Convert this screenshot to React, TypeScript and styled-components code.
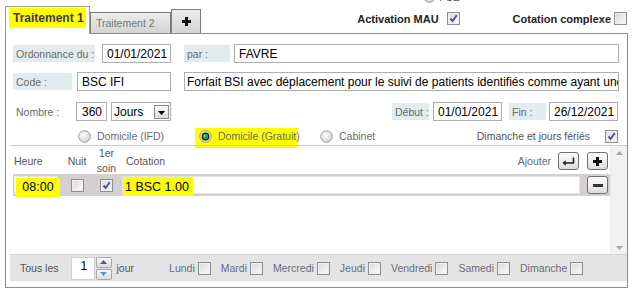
import React from "react";
import styled, { createGlobalStyle } from "styled-components";

const FONT = `"Liberation Sans", Arial, sans-serif`;

const GlobalStyle = createGlobalStyle`
  html, body { margin: 0; padding: 0; background: #ffffff; }
  body { font-family: ${FONT}; }
  * { box-sizing: border-box; }
`;

const Page = styled.div`
  width: 637px;
  height: 292px;
  overflow: hidden;
  font-family: ${FONT};
  color: #555;
`;

/* ---------- top bar with tabs ---------- */
const TopBar = styled.div`
  display: flex;
  height: 33px;
  align-items: flex-end;
`;

const Tabs = styled.div`
  display: flex;
  align-items: flex-end;
  padding-left: 5px;
  height: 100%;
`;

const ActiveTab = styled.div`
  position: relative;
  z-index: 2;
  width: 85px;
  height: 28px;
  margin-bottom: -1px;
  background: #fff;
  border: 1px solid #9a9a9a;
  border-bottom: none;
  padding: 1px 0 0 3px;
  display: flex;
  align-items: flex-start;
`;

const Mark = styled.span`
  background: #ffff00;
`;

const ActiveTabText = styled(Mark)`
  font-weight: bold;
  font-size: 12px;
  color: #3c3c3c;
  height: 20px;
  width: 77px;
  display: flex;
  align-items: center;
  padding-left: 4px;
  white-space: nowrap;
`;

const Tab = styled.div<{ $w: number; $h: number; $center?: boolean }>`
  width: ${(p) => p.$w}px;
  height: ${(p) => p.$h}px;
  background: linear-gradient(#ececec, #d4d4d4);
  border: 1px solid #7c7c7c;
  border-bottom: none;
  display: flex;
  align-items: center;
  justify-content: ${(p) => (p.$center ? "center" : "flex-start")};
  padding-left: ${(p) => (p.$center ? 0 : 5)}px;
  font-size: 10.5px;
  color: #777;
  white-space: nowrap;
`;

const TopRight = styled.div`
  margin-left: auto;
  padding-right: 10px;
  align-self: stretch;
  display: flex;
  flex-direction: column;
`;

const FseRow = styled.div`
  display: flex;
  align-items: center;
  gap: 3px;
  height: 13px;
  margin-top: -10px;
  padding-left: 66px;
  font-size: 10.5px;
  color: #555;
`;

const OptionsRow = styled.div`
  display: flex;
  align-items: center;
  margin-top: 9px;
  height: 13px;
`;

const BoldOption = styled.span<{ $gap: number; $ml?: number }>`
  display: flex;
  align-items: center;
  gap: ${(p) => p.$gap}px;
  margin-left: ${(p) => p.$ml ?? 0}px;
  font-weight: bold;
  font-size: 11px;
  color: #222;
  white-space: nowrap;
`;

/* ---------- panel ---------- */
const Panel = styled.div`
  margin-left: 5px;
  width: 623px;
  height: 255px;
  border: 1px solid #8d8d8d;
  display: flex;
  flex-direction: column;
`;

const Form = styled.div`
  height: 111px;
  padding: 10px 8px 0 7px;
  display: flex;
  flex-direction: column;
`;

const Row = styled.div<{ $mt?: number; $h?: number; $pl?: number }>`
  display: flex;
  align-items: center;
  height: ${(p) => p.$h ?? 19}px;
  margin-top: ${(p) => p.$mt ?? 0}px;
  padding-left: ${(p) => p.$pl ?? 0}px;
`;

const FieldLabel = styled.span<{ $w: number; $ml?: number; $plain?: boolean }>`
  flex-shrink: 0;
  width: ${(p) => p.$w}px;
  height: 17px;
  margin-left: ${(p) => p.$ml ?? 0}px;
  background: ${(p) => (p.$plain ? "transparent" : "#e1ecee")};
  color: #6a6a6a;
  font-size: 10.5px;
  padding-left: 3px;
  display: flex;
  align-items: center;
  white-space: nowrap;
`;

const TextBox = styled.div<{ $w?: number; $ml?: number; $pl?: number }>`
  ${(p) => (p.$w ? `width: ${p.$w}px; flex-shrink: 0;` : "flex: 1; min-width: 0;")}
  height: 19px;
  margin-left: ${(p) => p.$ml ?? 0}px;
  border: 1px solid #adadad;
  background: #fff;
  color: #000;
  font-size: 12px;
  padding-left: ${(p) => p.$pl ?? 4}px;
  display: flex;
  align-items: center;
  white-space: nowrap;
  overflow: hidden;
`;

const SelectBox = styled.div`
  width: 60px;
  height: 19px;
  margin-left: 4px;
  border: 1px solid #adadad;
  background: #fff;
  color: #000;
  font-size: 12px;
  padding: 0 1px 0 2px;
  display: flex;
  align-items: center;
  justify-content: space-between;
`;

const DropButton = styled.span`
  width: 15px;
  height: 14px;
  border: 1px solid #8a8a8a;
  background: linear-gradient(#fafafa, #dcdcdc);
  display: flex;
  align-items: center;
  justify-content: center;
  padding-top: 2px;
`;

const Spacer = styled.span`
  flex: 1;
`;

const EdgeGap = styled.span`
  flex: 0 0 1px;
`;

const RadioOption = styled.span<{ $w?: number }>`
  display: flex;
  align-items: center;
  gap: 6px;
  width: ${(p) => (p.$w ? `${p.$w}px` : "auto")};
  font-size: 10.5px;
  color: #6a6a6a;
  white-space: nowrap;
`;

const MarkedRadio = styled(Mark)`
  display: flex;
  align-items: center;
  gap: 6px;
  margin-left: -4px;
  padding: 2px 0 5px 4px;
  margin-top: 3px;
  width: 102px;
  height: 20px;
`;

const PlainOption = styled.span<{ $gap: number; $mr?: number }>`
  display: flex;
  align-items: center;
  gap: ${(p) => p.$gap}px;
  margin-right: ${(p) => p.$mr ?? 0}px;
  font-size: 10.5px;
  color: #555;
  white-space: nowrap;
`;

/* ---------- grid ---------- */
const GridArea = styled.div`
  display: flex;
  height: 109px;
  margin-left: 4px;
  border-top: 1px solid #c9c9c9;
`;

const GridBody = styled.div`
  flex: 1;
  padding-left: 3px;
  display: flex;
  flex-direction: column;
`;

const GridRow = styled.div<{ $data?: boolean }>`
  display: grid;
  grid-template-columns: 47px 34px 25px 1fr 29px;
  align-items: center;
  height: ${(p) => (p.$data ? 22 : 27)}px;
  margin-top: ${(p) => (p.$data ? 1 : 0)}px;
  background: ${(p) => (p.$data ? "#d4d0d0" : "transparent")};
  font-size: 10.5px;
  color: #555;
`;

const Cell = styled.div<{ $pl?: number; $center?: boolean }>`
  display: flex;
  align-items: center;
  justify-content: ${(p) => (p.$center ? "center" : "flex-start")};
  padding-left: ${(p) => p.$pl ?? 0}px;
  text-align: center;
  line-height: 15px;
  white-space: nowrap;
`;

const HeaderActions = styled.div`
  display: flex;
  align-items: center;
  justify-content: flex-end;
  gap: 7px;
  padding-right: 2px;
  color: #6a6a6a;
`;

const HeaderTitle = styled.span`
  margin-right: auto;
  padding-left: 7px;
  color: #555;
`;

const IconButton = styled.button`
  width: 21px;
  height: 18px;
  padding: 0;
  border: 1px solid #6f6f6f;
  border-radius: 3px;
  background: linear-gradient(#fdfdfd, #dedede);
  display: flex;
  align-items: center;
  justify-content: center;
`;

const TimeBox = styled.div`
  width: 44px;
  height: 18px;
  margin-left: 1px;
  background: #fff;
  border: 1px solid #e4e4e4;
  padding: 1px 0 0 1px;
`;

const TimeMark = styled(Mark)`
  display: flex;
  align-items: center;
  justify-content: center;
  width: 44px;
  height: 19px;
  font-size: 12.5px;
  color: #000;
`;

const CotationBox = styled.div`
  height: 18px;
  margin: 0 1px 0 3px;
  background: #fff;
  border: 1px solid #e4e4e4;
`;

const CotationMark = styled(Mark)`
  display: flex;
  align-items: center;
  width: 70px;
  height: 19px;
  padding-left: 2px;
  font-size: 12.5px;
  color: #000;
  white-space: nowrap;
`;

const ScrollBar = styled.div`
  width: 17px;
  background: #f1f1f1;
  border-left: 1px solid #e8e8e8;
  display: flex;
  flex-direction: column;
  align-items: center;
  justify-content: space-between;
  padding: 5px 0 4px;
`;

/* ---------- bottom bar ---------- */
const BottomBar = styled.div`
  height: 27px;
  margin-left: 4px;
  background: #e4e4e4;
  border-top: 1px solid #d6d6d6;
  display: flex;
  align-items: center;
  padding-left: 10px;
  font-size: 10.5px;
  color: #555;
  white-space: nowrap;
`;

const SpinInput = styled.div`
  width: 24px;
  height: 23px;
  margin-left: 12px;
  background: #fff;
  border: 1px solid #d0d0d0;
  color: #000;
  font-size: 12px;
  padding: 0 0 0 9px;
  line-height: 17px;
`;

const SpinButtons = styled.div`
  width: 16px;
  height: 23px;
  margin-left: 1px;
  display: flex;
  flex-direction: column;
  gap: 1px;
`;

const SpinButton = styled.span`
  flex: 1;
  border: 1px solid #a8a8a8;
  border-radius: 2px;
  background: linear-gradient(#f7f7f7, #dcdcdc);
  display: flex;
  align-items: center;
  justify-content: center;
`;

const Unit = styled.span`
  margin-left: 5px;
`;

const Days = styled.div`
  display: flex;
  align-items: center;
  gap: 10px;
  margin-left: 35px;
`;

const Day = styled.span`
  display: flex;
  align-items: center;
  gap: 3px;
  color: #6b6b80;
`;

const Tail = styled.div`
  height: 6px;
`;

/* ---------- small drawn controls ---------- */
const BoxShell = styled.span`
  flex-shrink: 0;
  width: 13px;
  height: 13px;
  border: 1px solid #8e8e8e;
  background: linear-gradient(135deg, #d8d8d8, #fdfdfd);
  box-shadow: inset 0 0 0 1px #efefef;
  display: inline-flex;
  align-items: center;
  justify-content: center;
`;

function Check({ checked }: { checked?: boolean }) {
  return (
    <BoxShell>
      {checked && (
        <svg width="11" height="11" viewBox="0 0 11 11">
          <path d="M2.5 5.5 L4.6 8 L8.8 2.2" stroke="#4a58a6" strokeWidth="2" fill="none" />
        </svg>
      )}
    </BoxShell>
  );
}

function Radio({ selected }: { selected?: boolean }) {
  const id = selected ? "rs" : "ru";
  return (
    <svg width="13" height="13" viewBox="0 0 13 13" style={{ flexShrink: 0 }}>
      <defs>
        <radialGradient id={id} cx="0.4" cy="0.35" r="0.7">
          <stop offset="0" stopColor="#ffffff" />
          <stop offset="1" stopColor="#cfcfcf" />
        </radialGradient>
      </defs>
      <circle cx="6.5" cy="6.5" r="5.8" fill={`url(#${id})`} stroke="#9b9b9b" strokeWidth="1" />
      {selected && (
        <>
          <circle cx="6.5" cy="6.5" r="3.9" fill="#1f2a1f" />
          <circle cx="6.5" cy="6.5" r="2.7" fill="#2ea52e" />
          <circle cx="5.8" cy="5.8" r="0.9" fill="#9be29b" />
        </>
      )}
    </svg>
  );
}

const Tri = ({ down, color, w = 7, h = 4 }: { down?: boolean; color: string; w?: number; h?: number }) => (
  <svg width={w} height={h} viewBox={`0 0 ${w} ${h}`}>
    <polygon points={down ? `0,0 ${w},0 ${w / 2},${h}` : `0,${h} ${w / 2},0 ${w},${h}`} fill={color} />
  </svg>
);

const PlusIcon = () => (
  <svg width="9" height="9" viewBox="0 0 9 9">
    <rect x="3" y="0" width="3" height="9" fill="#111" />
    <rect x="0" y="3" width="9" height="3" fill="#111" />
  </svg>
);

const MinusIcon = () => (
  <svg width="10" height="3" viewBox="0 0 10 3">
    <rect x="0" y="0" width="10" height="3" fill="#333" />
  </svg>
);

const EnterIcon = () => (
  <svg width="13" height="9" viewBox="0 0 13 9">
    <path d="M11.5 0.5 V6 H3" stroke="#222" strokeWidth="1.6" fill="none" />
    <path d="M0.5 6 L3.8 3.2 V8.8 Z" fill="#222" />
  </svg>
);

const days = ["Lundi", "Mardi", "Mercredi", "Jeudi", "Vendredi", "Samedi", "Dimanche"];

export default function App() {
  return (
    <Page>
      <GlobalStyle />
      <TopBar>
        <Tabs>
          <ActiveTab>
            <ActiveTabText>Traitement 1</ActiveTabText>
          </ActiveTab>
          <Tab $w={81} $h={21}>Traitement 2</Tab>
          <Tab $w={30} $h={24} $center>
            <PlusIcon />
          </Tab>
        </Tabs>
        <TopRight>
          <FseRow>
            <Radio />
            <span>FSE</span>
          </FseRow>
          <OptionsRow>
            <BoldOption $gap={8}>
              Activation MAU <Check checked />
            </BoldOption>
            <BoldOption $gap={3} $ml={53}>
              Cotation complexe <Check />
            </BoldOption>
          </OptionsRow>
        </TopRight>
      </TopBar>

      <Panel>
        <Form>
          <Row>
            <FieldLabel $w={82}>Ordonnance du :</FieldLabel>
            <TextBox $w={69} $ml={7}>01/01/2021</TextBox>
            <FieldLabel $w={46} $ml={13}>par :</FieldLabel>
            <TextBox $ml={4}>FAVRE</TextBox>
          </Row>
          <Row $mt={9}>
            <FieldLabel $w={59}>Code :</FieldLabel>
            <TextBox $w={94} $ml={5}>BSC IFI</TextBox>
            <TextBox $ml={13} $pl={2}>
              Forfait BSI avec déplacement pour le suivi de patients identifiés comme ayant une dépendance
            </TextBox>
          </Row>
          <Row $mt={11}>
            <FieldLabel $w={63} $plain>Nombre :</FieldLabel>
            <TextBox $w={31} $pl={5}>360</TextBox>
            <SelectBox>
              Jours
              <DropButton>
                <Tri down color="#000" />
              </DropButton>
            </SelectBox>
            <Spacer />
            <FieldLabel $w={37}>Début :</FieldLabel>
            <TextBox $w={69} $ml={4}>01/01/2021</TextBox>
            <FieldLabel $w={37} $ml={7}>Fin :</FieldLabel>
            <TextBox $w={69} $ml={3}>26/12/2021</TextBox>
            <EdgeGap />
          </Row>
          <Row $mt={8} $h={14} $pl={65}>
            <RadioOption $w={121}>
              <Radio /> Domicile (IFD)
            </RadioOption>
            <RadioOption $w={121}>
              <MarkedRadio>
                <Radio selected /> Domicile (Gratuit)
              </MarkedRadio>
            </RadioOption>
            <RadioOption>
              <Radio /> Cabinet
            </RadioOption>
            <Spacer />
            <PlainOption $gap={15} $mr={1}>
              Dimanche et jours fériés <Check checked />
            </PlainOption>
          </Row>
        </Form>

        <GridArea>
          <GridBody>
            <GridRow>
              <Cell $pl={1}>Heure</Cell>
              <Cell $center>Nuit</Cell>
              <Cell $center>
                1er
                <br />
                soin
              </Cell>
              <HeaderActions>
                <HeaderTitle>Cotation</HeaderTitle>
                Ajouter
                <IconButton>
                  <EnterIcon />
                </IconButton>
              </HeaderActions>
              <Cell $pl={6}>
                <IconButton>
                  <PlusIcon />
                </IconButton>
              </Cell>
            </GridRow>
            <GridRow $data>
              <Cell>
                <TimeBox>
                  <TimeMark>08:00</TimeMark>
                </TimeBox>
              </Cell>
              <Cell $center>
                <Check />
              </Cell>
              <Cell $center>
                <Check checked />
              </Cell>
              <CotationBox>
                <CotationMark>1 BSC 1.00</CotationMark>
              </CotationBox>
              <Cell $pl={6}>
                <IconButton>
                  <MinusIcon />
                </IconButton>
              </Cell>
            </GridRow>
          </GridBody>
          <ScrollBar>
            <Tri color="#a6a6a6" />
            <Tri down color="#a6a6a6" />
          </ScrollBar>
        </GridArea>

        <BottomBar>
          Tous les
          <SpinInput>1</SpinInput>
          <SpinButtons>
            <SpinButton>
              <Tri color="#3f5f94" />
            </SpinButton>
            <SpinButton>
              <Tri down color="#6f8fc0" />
            </SpinButton>
          </SpinButtons>
          <Unit>jour</Unit>
          <Days>
            {days.map((d) => (
              <Day key={d}>
                {d}
                <Check />
              </Day>
            ))}
          </Days>
        </BottomBar>
        <Tail />
      </Panel>
    </Page>
  );
}
